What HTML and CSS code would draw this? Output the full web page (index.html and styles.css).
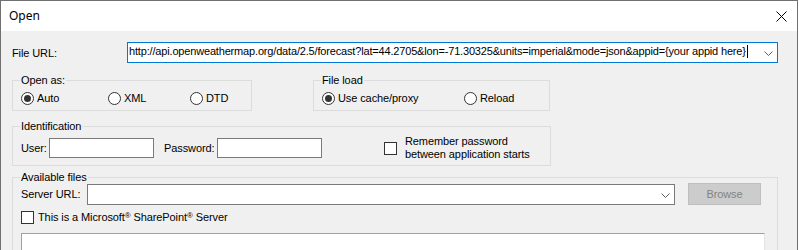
FILE: index.html
```html
<!DOCTYPE html>
<html>
<head>
<meta charset="utf-8">
<link rel="stylesheet" href="styles.css">
</head>
<body>
<div class="window">
  <div class="titlebar">
    <span class="title">Open</span>
    <svg class="close" width="11" height="11" viewBox="0 0 11 11"><path d="M0.5 0.5 L10.5 10.5 M10.5 0.5 L0.5 10.5" stroke="#000" stroke-width="1" fill="none"/></svg>
  </div>
  <div class="content">
    <div class="url-row">
      <label class="url-label">File URL:</label>
      <div class="combo url-combo">
        <span class="combo-text">http://api.openweathermap.org/data/2.5/forecast?lat=44.2705&amp;lon=-71.30325&amp;units=imperial&amp;mode=json&amp;appid={your appid here}</span><span class="caret"></span>
        <svg class="chev" width="9" height="5" viewBox="0 0 9 5"><path d="M0.5 0.5 L4.5 4.5 L8.5 0.5" stroke="#606060" stroke-width="1" fill="none"/></svg>
      </div>
    </div>
    <div class="groups-row">
      <fieldset class="group open-as">
        <legend>Open as:</legend>
        <div class="radios open-radios">
          <div class="radio-item"><span class="radio checked"></span><span>Auto</span></div>
          <div class="radio-item"><span class="radio"></span><span>XML</span></div>
          <div class="radio-item"><span class="radio"></span><span>DTD</span></div>
        </div>
      </fieldset>
      <fieldset class="group file-load">
        <legend>File load</legend>
        <div class="radios load-radios">
          <div class="radio-item"><span class="radio checked"></span><span>Use cache/proxy</span></div>
          <div class="radio-item"><span class="radio"></span><span>Reload</span></div>
        </div>
      </fieldset>
    </div>
    <fieldset class="group ident">
      <legend>Identification</legend>
      <div class="ident-row">
        <label class="lbl-user">User:</label>
        <div class="textbox"></div>
        <label class="lbl-pass">Password:</label>
        <div class="textbox"></div>
        <span class="checkbox remember-box"></span>
        <span class="remember-text">Remember password<br>between application starts</span>
      </div>
    </fieldset>
    <fieldset class="group avail">
      <legend>Available files</legend>
      <div class="server-row">
        <label class="lbl-server">Server URL:</label>
        <div class="combo server-combo">
          <svg class="chev" width="9" height="5" viewBox="0 0 9 5"><path d="M0.5 0.5 L4.5 4.5 L8.5 0.5" stroke="#606060" stroke-width="1" fill="none"/></svg>
        </div>
        <div class="button disabled">Browse</div>
      </div>
      <div class="sp-row">
        <span class="checkbox"></span>
        <span>This is a Microsoft<span class="reg">®</span> SharePoint<span class="reg">®</span> Server</span>
      </div>
      <div class="listbox"></div>
    </fieldset>
  </div>
</div>
</body>
</html>
```

FILE: styles.css
```css
html, body {
  margin: 0;
  padding: 0;
  background: #ffffff;
}
body {
  font-family: "Liberation Sans", Arial, sans-serif;
  font-size: 11px;
  line-height: 13px;
  letter-spacing: -0.1px;
  color: #000000;
}
.window {
  width: 796px;
  height: 249px;
  border: 1px solid #707070;
  border-bottom: none;
  background: #f0f0f0;
  overflow: hidden;
}
.titlebar {
  height: 30px;
  background: #ffffff;
  display: flex;
  align-items: center;
  justify-content: space-between;
  padding: 0 10px 0 8px;
}
.title {
  font-family: "Noto Sans", "Open Sans", sans-serif;
  font-size: 12px;
  line-height: 16px;
  letter-spacing: 0;
}
.close {
  display: block;
}
.content {
  padding: 11px 0 0 11px;
}
.url-row {
  display: flex;
  align-items: flex-start;
}
.url-label {
  width: 115px;
  margin-top: 5px;
}
.combo {
  background: #ffffff;
  border: 1px solid #7a7a7a;
  display: flex;
  align-items: flex-start;
  box-sizing: border-box;
}
.url-combo {
  width: 651px;
  height: 21px;
  border-color: #0078d7;
  padding: 2px 0 0 1px;
}
.combo-text {
  white-space: nowrap;
  letter-spacing: -0.17px;
}
.caret {
  width: 1px;
  height: 13px;
  background: #000;
  margin-left: 1px;
  flex: none;
}
.chev {
  display: block;
  margin-left: auto;
  flex: none;
}
.url-combo .chev {
  margin-top: 6px;
  margin-right: 4px;
}
.groups-row {
  display: flex;
  margin-top: 11px;
}
.group {
  margin: 0;
  padding: 0 0 0 8px;
  border: 1px solid #dcdcdc;
  box-sizing: border-box;
  min-inline-size: 0;
}
.group legend {
  padding: 0 1px;
  margin-left: -1px;
  line-height: 13px;
}
.open-as {
  width: 240px;
  padding-top: 5px;
  padding-bottom: 5px;
}
.file-load {
  width: 237px;
  margin-left: 61px;
  padding-top: 5px;
  padding-bottom: 5px;
}
.radios {
  display: grid;
}
.open-radios {
  grid-template-columns: 87px 82px auto;
}
.load-radios {
  grid-template-columns: 142px auto;
}
.radio-item {
  display: flex;
  align-items: center;
  gap: 3px;
}
.radio {
  width: 13px;
  height: 13px;
  box-sizing: border-box;
  border: 1px solid #333333;
  border-radius: 50%;
  background: #ffffff;
  display: flex;
  align-items: center;
  justify-content: center;
}
.radio.checked::after {
  content: "";
  width: 7px;
  height: 7px;
  border-radius: 50%;
  background: #333333;
}
.ident {
  width: 539px;
  margin-top: 9px;
  padding-top: 5px;
  padding-bottom: 7px;
}
.ident-row {
  display: flex;
  align-items: center;
  height: 20px;
}
.lbl-user {
  width: 28px;
}
.lbl-pass {
  width: 53px;
  margin-left: 10px;
}
.textbox {
  width: 105px;
  height: 20px;
  box-sizing: border-box;
  background: #ffffff;
  border: 1px solid #7a7a7a;
}
.checkbox {
  width: 13px;
  height: 13px;
  box-sizing: border-box;
  border: 1px solid #333333;
  background: #ffffff;
  flex: none;
}
.remember-box {
  margin-left: 62px;
}
.remember-text {
  margin-left: 8px;
  white-space: nowrap;
}
.avail {
  width: 766px;
  margin-top: 5px;
  padding-right: 12px;
  padding-bottom: 10px;
}
.server-row {
  display: flex;
  align-items: flex-end;
  height: 22px;
  margin-top: -1px;
}
.lbl-server {
  width: 66px;
  align-self: flex-start;
  margin-top: 5px;
}
.server-combo {
  width: 588px;
  height: 21px;
}
.server-combo .chev {
  margin-top: 8px;
  margin-right: 4px;
}
.button {
  width: 73px;
  height: 22px;
  box-sizing: border-box;
  margin-left: 13px;
  display: flex;
  align-items: center;
  justify-content: center;
}
.button.disabled {
  background: #cccccc;
  border: 1px solid #bfbfbf;
  color: #838383;
}
.sp-row {
  display: flex;
  align-items: center;
  gap: 4px;
  margin-top: 6px;
}
.reg {
  font-size: 8px;
  vertical-align: 3px;
  line-height: 0;
}
.listbox {
  margin-top: 9px;
  width: 744px;
  height: 60px;
  box-sizing: border-box;
  background: #ffffff;
  border: 1px solid #a0a0a0;
  border-right-color: #e3e3e3;
  border-bottom-color: #e3e3e3;
}
```
